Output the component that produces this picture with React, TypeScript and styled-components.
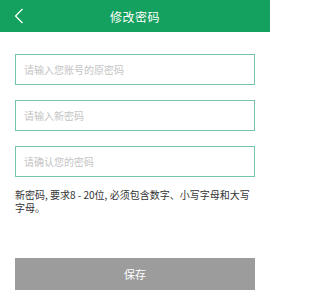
import React from 'react'
import styled, { createGlobalStyle } from 'styled-components'

const GlobalStyle = createGlobalStyle`
  html, body {
    margin: 0;
    padding: 0;
    background: #ffffff;
    font-family: 'Noto Sans CJK SC', 'Noto Sans', sans-serif;
  }
`

const Page = styled.div`
  width: 270px;
  height: 298px;
  display: flex;
  flex-direction: column;
  background: #ffffff;
`

const Header = styled.div`
  height: 32px;
  background: #14a05e;
  display: flex;
  align-items: center;
  justify-content: center;
  position: relative;
`

const BackButton = styled.button`
  position: absolute;
  left: 10px;
  top: 6px;
  width: 18px;
  height: 20px;
  padding: 0;
  border: none;
  background: transparent;
  display: flex;
  align-items: center;
  justify-content: center;
`

const Title = styled.h1`
  margin: 0;
  font-size: 12px;
  font-weight: 400;
  letter-spacing: 0.5px;
  color: #ffffff;
`

const Form = styled.form`
  display: flex;
  flex-direction: column;
  padding: 22px 15px 0;
`

const Field = styled.input`
  box-sizing: border-box;
  height: 31px;
  width: 240px;
  margin-bottom: 15px;
  padding: 0 8px;
  border: 1.5px solid #74c6a6;
  border-radius: 0;
  outline: none;
  font-family: inherit;
  font-size: 10px;
  color: #333;

  &::placeholder {
    color: #c4c4c4;
  }
`

const Hint = styled.p`
  margin: -4px 0 0;
  font-size: 10px;
  line-height: 13px;
  color: #333333;
`

const SaveButton = styled.button`
  box-sizing: border-box;
  margin-top: 44px;
  width: 240px;
  height: 32px;
  border: none;
  background: #9c9c9c;
  color: #ffffff;
  font-family: inherit;
  font-size: 11px;
`

export default function App() {
  return (
    <Page>
      <GlobalStyle />
      <Header>
        <BackButton type="button">
          <svg width="10" height="16" viewBox="0 0 10 16">
            <polyline
              points="8.5,1 1.5,8 8.5,15"
              fill="none"
              stroke="#ffffff"
              strokeWidth="1.3"
            />
          </svg>
        </BackButton>
        <Title>修改密码</Title>
      </Header>
      <Form onSubmit={e => e.preventDefault()}>
        <Field type="password" placeholder="请输入您账号的原密码" />
        <Field type="password" placeholder="请输入新密码" />
        <Field type="password" placeholder="请确认您的密码" />
        <Hint>新密码, 要求8 - 20位, 必须包含数字、小写字母和大写字母。</Hint>
        <SaveButton type="submit">保存</SaveButton>
      </Form>
    </Page>
  )
}
